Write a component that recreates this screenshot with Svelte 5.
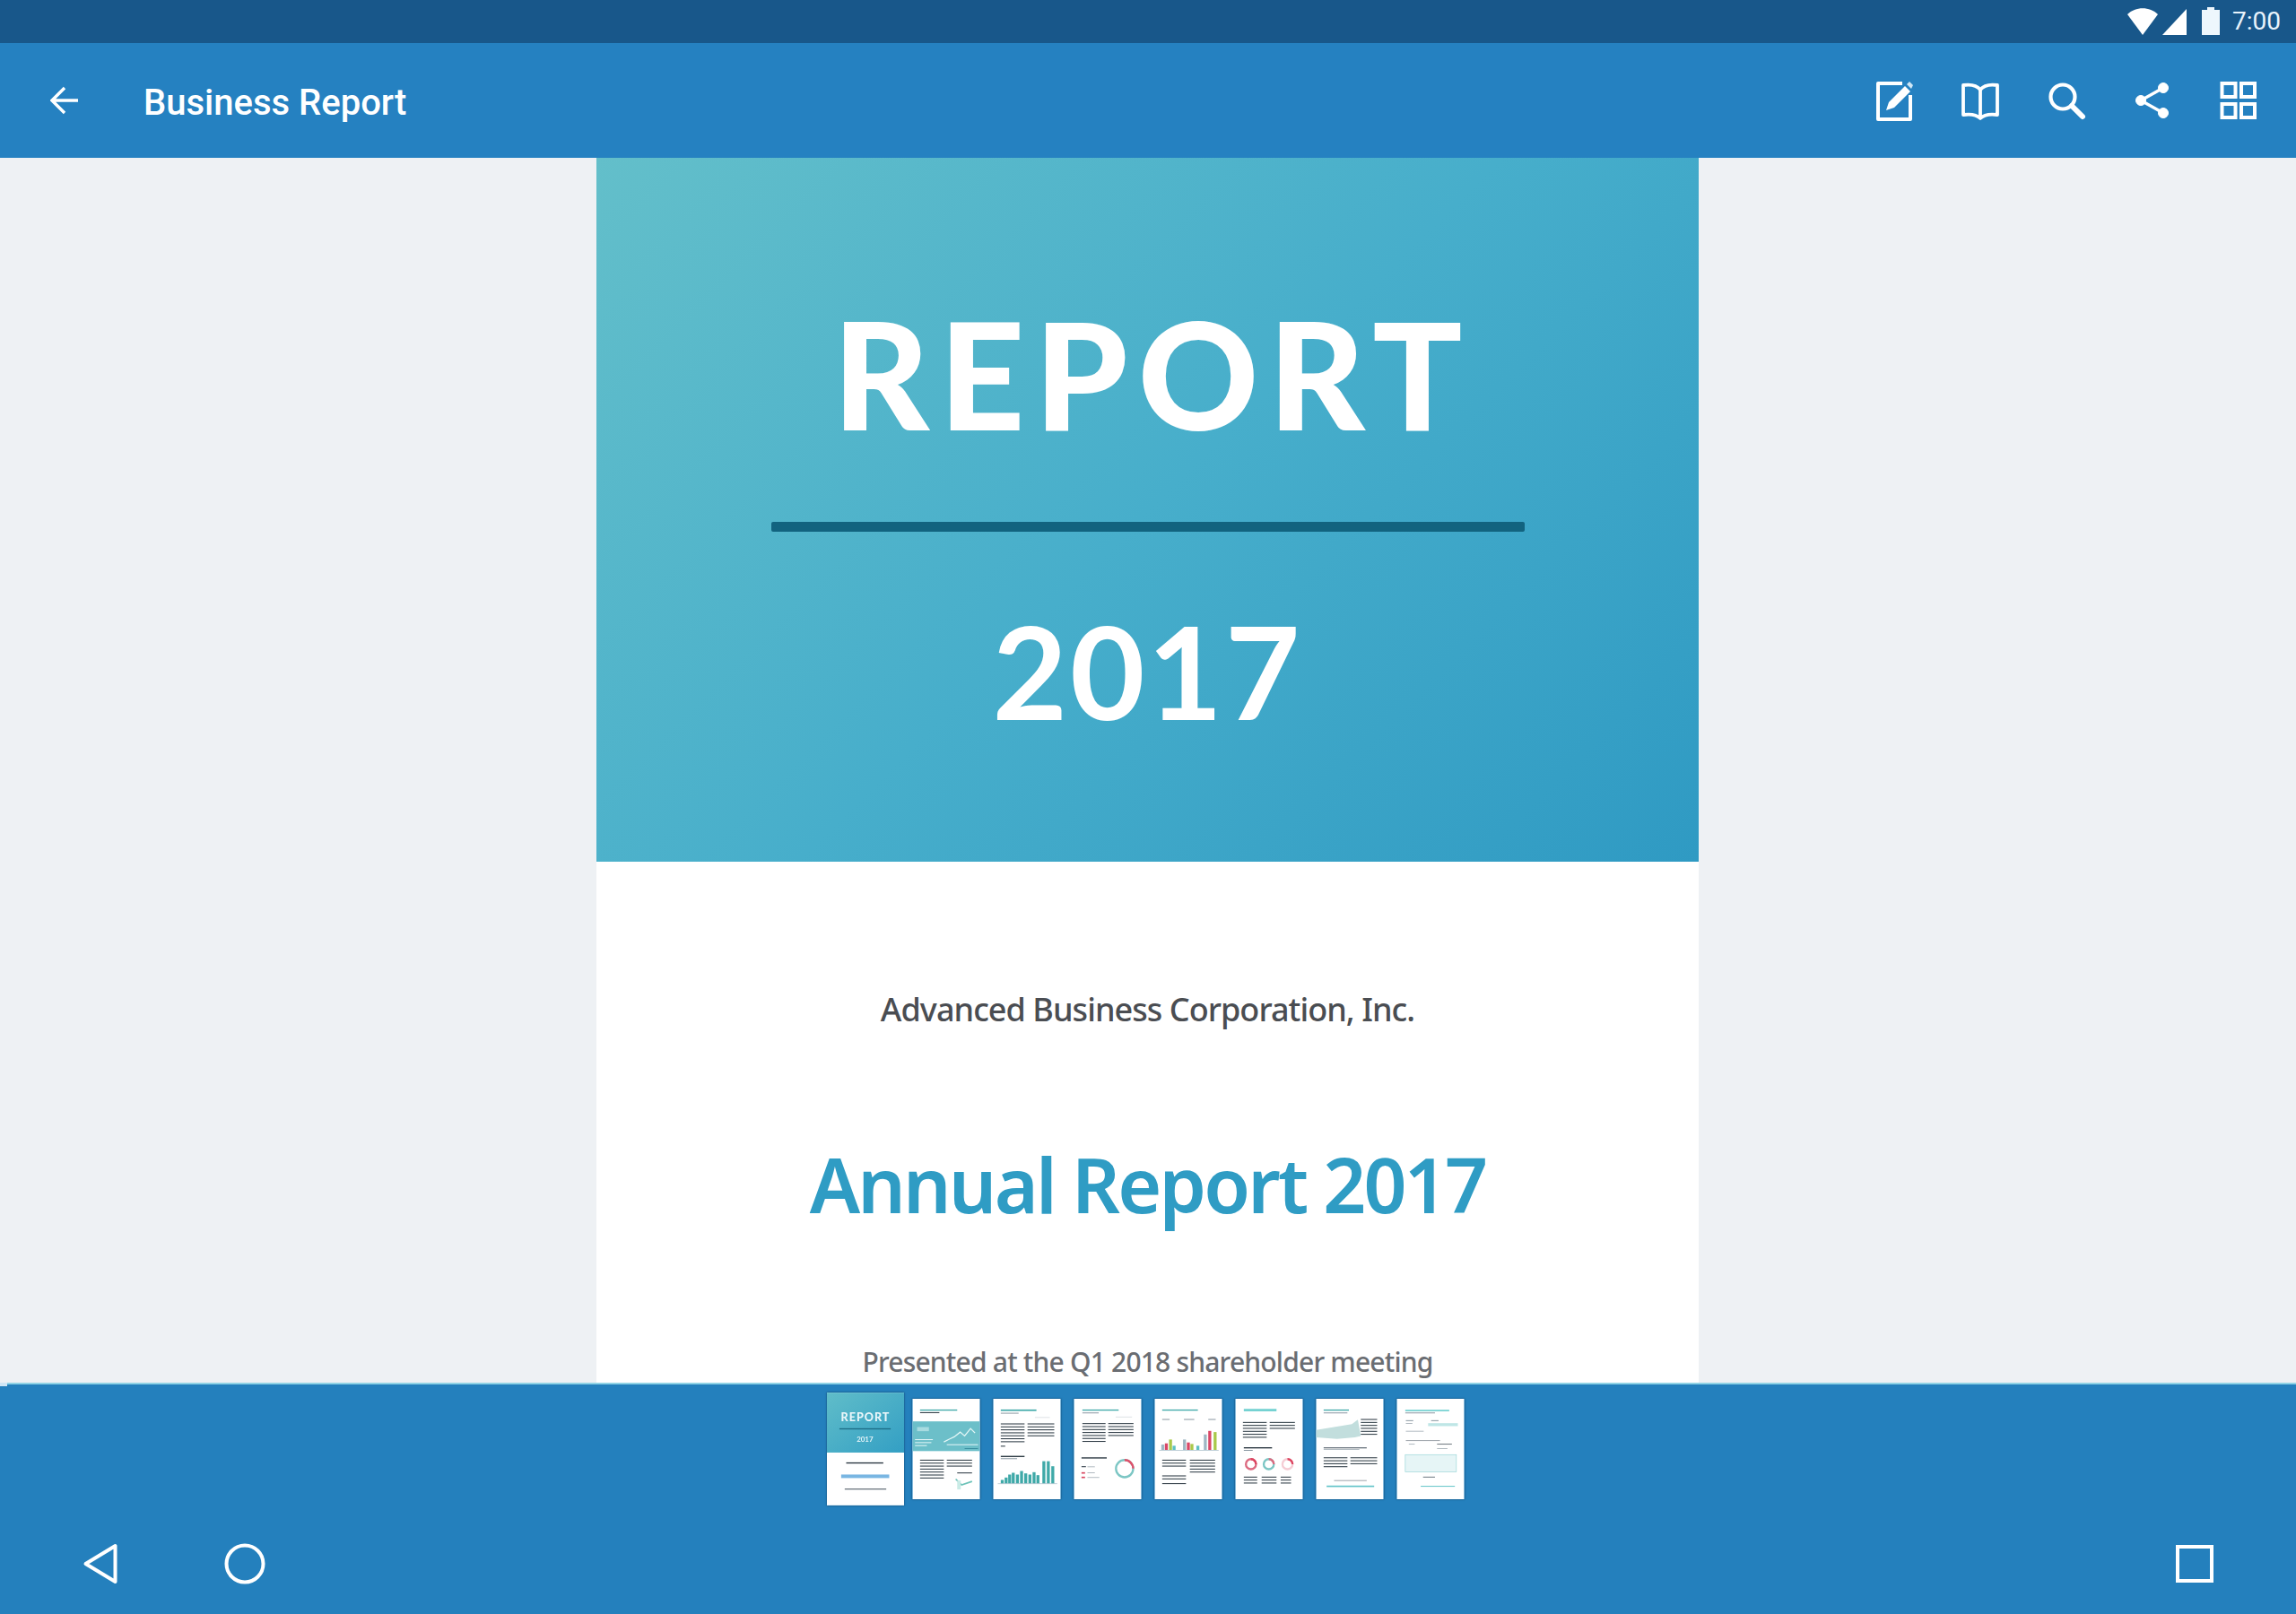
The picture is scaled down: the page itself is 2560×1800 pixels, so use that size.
<script>
  const dark = '#24323c';
  const teal = '#3fa9a8';
  const grey = '#8a98a2';
  const col = (x, w, y0, n, step = 10) => Array.from({ length: n }, (_, i) => ({ x, w, y: y0 + i * step, h: 3, c: dark }));
  const thumbs = [
    { lines: [
      { x: 25, w: 125, y: 36, h: 4, c: teal }, { x: 25, w: 65, y: 45, h: 3, c: dark },
      ...col(25, 80, 205, 7), ...col(115, 85, 205, 3), { x: 150, w: 50, y: 248, h: 3, c: dark }
    ], band: true },
    { lines: [
      { x: 25, w: 120, y: 36, h: 5, c: teal }, { x: 25, w: 60, y: 47, h: 3, c: grey }, { x: 140, w: 50, y: 62, h: 2, c: '#ccd3d8' },
      ...col(25, 80, 83, 7), ...col(115, 90, 83, 5), { x: 25, w: 15, y: 158, h: 3, c: dark },
      { x: 25, w: 80, y: 192, h: 4, c: dark }, { x: 25, w: 55, y: 200, h: 3, c: grey }
    ], bars: [[25,12],[38,20],[50,30],[62,36],[76,30],[90,42],[104,34],[118,30],[132,38],[145,28],[165,75],[180,75],[195,58]], barBase: 285, barColors: [teal] },
    { lines: [
      { x: 28, w: 122, y: 36, h: 4, c: teal }, { x: 28, w: 55, y: 46, h: 3, c: grey }, { x: 140, w: 55, y: 60, h: 2, c: '#ccd3d8' },
      ...col(28, 78, 82, 7), ...col(115, 85, 82, 5), { x: 25, w: 85, y: 197, h: 4, c: dark }, { x: 25, w: 15, y: 227, h: 3, c: dark },
      { x: 45, w: 25, y: 228, h: 2, c: grey }, { x: 25, w: 12, y: 247, h: 5, c: '#d8455f' }, { x: 45, w: 25, y: 248, h: 2, c: grey },
      { x: 25, w: 12, y: 262, h: 5, c: '#d8455f' }, { x: 45, w: 40, y: 264, h: 2, c: grey }
    ], donuts: [{ cx: 170, cy: 235, r: 29, w: 7, c: '#7cc6c4', a: '#e0506a' }] },
    { lines: [
      { x: 25, w: 120, y: 36, h: 4, c: teal }, { x: 25, w: 25, y: 68, h: 3, c: grey }, { x: 98, w: 35, y: 68, h: 3, c: grey }, { x: 180, w: 25, y: 68, h: 3, c: grey },
      ...col(25, 80, 205, 3), ...col(118, 85, 205, 5), { x: 25, w: 80, y: 258, h: 3, c: dark }, { x: 25, w: 80, y: 268, h: 3, c: dark }, { x: 25, w: 80, y: 284, h: 3, c: dark }
    ], bars: [[22,18],[34,22],[48,35],[60,14],[95,35],[108,25],[120,20],[140,14],[165,52],[180,64],[198,60]], barBase: 172, barColors: ['#9fb7c4', '#d94766', '#a9c94a', '#5cc0c4'] },
    { lines: [
      { x: 28, w: 110, y: 34, h: 8, c: '#6fd0d0' }, ...col(25, 80, 78, 6), ...col(115, 85, 78, 3),
      { x: 28, w: 95, y: 163, h: 4, c: dark }, { x: 28, w: 30, y: 172, h: 3, c: grey },
      ...col(28, 45, 262, 3), ...col(88, 50, 262, 3), ...col(152, 35, 262, 3)
    ], donuts: [
      { cx: 52, cy: 220, r: 17, w: 7, c: '#dc6a80', a: '#dc4560' },
      { cx: 112, cy: 220, r: 17, w: 7, c: '#7cc6c4', a: '#dc6a80' },
      { cx: 175, cy: 220, r: 17, w: 7, c: '#f5ccd4', a: '#dc4560' }
    ] },
    { lines: [
      { x: 25, w: 85, y: 36, h: 4, c: teal }, { x: 25, w: 80, y: 46, h: 3, c: grey },
      ...col(150, 55, 68, 6), { x: 25, w: 145, y: 163, h: 4, c: '#6d7780' }, { x: 25, w: 120, y: 170, h: 2, c: grey },
      ...col(25, 80, 197, 4), ...col(115, 90, 197, 3), { x: 60, w: 110, y: 274, h: 2, c: '#6d7780' }, { x: 35, w: 160, y: 292, h: 5, c: '#62c4c8' }
    ], wash: 'M0 105 L60 95 L120 85 L140 70 L150 125 L130 130 L70 135 L0 130 Z' },
    { lines: [
      { x: 28, w: 148, y: 37, h: 5, c: '#6fd0d0' }, { x: 28, w: 100, y: 46, h: 3, c: grey }, { x: 30, w: 25, y: 72, h: 3, c: grey }, { x: 115, w: 25, y: 72, h: 3, c: grey },
      { x: 30, w: 22, y: 82, h: 2, c: grey }, { x: 105, w: 100, y: 82, h: 10, c: '#bfe6e6' }, { x: 30, w: 60, y: 108, h: 2, c: grey },
      { x: 30, w: 115, y: 140, h: 2, c: '#6d7780' }, { x: 40, w: 20, y: 152, h: 2, c: grey }, { x: 135, w: 50, y: 152, h: 2, c: dark }, { x: 135, w: 35, y: 166, h: 2, c: grey },
      { x: 88, w: 40, y: 262, h: 3, c: '#6d7780' }, { x: 80, w: 115, y: 293, h: 3, c: '#62c4c8' }
    ], box: true }
  ];
</script>

<div class="screen">
  <header class="status">
    <svg class="ic-wifi" viewBox="0 0 34 30" width="34" height="30"><path d="M0 7 C9 -2 25 -2 34 7 L17 30 Z" fill="#fff"/></svg>
    <svg class="ic-signal" viewBox="0 0 27 29" width="27" height="29"><path d="M27 0 V29 H0 Z" fill="#fff"/></svg>
    <svg class="ic-battery" viewBox="0 0 20 31" width="20" height="31"><path d="M6 0 H14 V3 H20 V31 H0 V3 H6 Z" fill="#eef7fd"/></svg>
    <span class="time">7:00</span>
  </header>

  <nav class="toolbar">
    <svg class="back" viewBox="0 0 32 32" width="32" height="32"><path d="M31 16 H3 M16 2 L2 16 L16 30" fill="none" stroke="#fff" stroke-width="3.4"/></svg>
    <h1>Business Report</h1>
    <div class="actions">
      <svg viewBox="0 0 48 48" width="48" height="48" fill="none" stroke="#fff" stroke-width="4">
        <path d="M33 5 H6 V45 H42 V18" stroke-linejoin="round"/>
        <path d="M15 35 L18 26 L36 8 L42 14 L24 32 Z" fill="#fff" stroke="none"/>
        <path d="M38 6 L41 3 L45 7 L43 11 Z" fill="#cfe6f5" stroke="none"/>
      </svg>
      <svg viewBox="0 0 48 48" width="48" height="48" fill="none" stroke="#fff" stroke-width="3.8" stroke-linejoin="round">
        <path d="M24 12 C20 7 12 6 5 7 V40 C12 39 20 40 24 44 C28 40 36 39 43 40 V7 C36 6 28 7 24 12 Z"/>
        <path d="M24 12 V44"/>
      </svg>
      <svg viewBox="0 0 48 48" width="48" height="48" fill="none" stroke="#fff">
        <circle cx="20" cy="20" r="13.5" stroke-width="4.2"/>
        <path d="M30 30 L42 42" stroke-width="6" stroke-linecap="round"/>
      </svg>
      <svg viewBox="0 0 48 48" width="48" height="48" fill="#fff" stroke="#fff">
        <path d="M36 10 L11 24 L36 38" fill="none" stroke-width="3.4"/>
        <circle cx="36" cy="10" r="5.5"/><circle cx="11" cy="24" r="5.5"/><circle cx="36" cy="38" r="5.5"/>
      </svg>
      <svg viewBox="0 0 48 48" width="48" height="48" fill="none" stroke="#fff" stroke-width="4">
        <rect x="5.5" y="5" width="15" height="15"/><rect x="27" y="5" width="15" height="15"/>
        <rect x="5.5" y="28" width="15" height="15"/><rect x="27" y="28" width="15" height="15"/>
      </svg>
    </div>
  </nav>

  <main class="viewer">
    <article class="page">
      <section class="hero">
        <div class="hero-title">REPORT</div>
        <div class="hero-rule"></div>
        <div class="hero-year">2017</div>
      </section>
      <section class="body">
        <p class="company">Advanced Business Corporation, Inc.</p>
        <p class="annual">Annual Report 2017</p>
        <p class="presented">Presented at the Q1 2018 shareholder meeting</p>
      </section>
    </article>
  </main>

  <footer class="bottom">
    <div class="progress"></div>
    <div class="strip">
      <div class="thumb first">
        <svg viewBox="0 0 260 380" width="86" height="126" class="mini">
          <defs><linearGradient id="tg" x1="0" y1="0" x2="1" y2="1"><stop offset="0" stop-color="#60bdc9"/><stop offset="1" stop-color="#339fc4"/></linearGradient></defs>
          <rect width="260" height="380" fill="#fff"/>
          <rect width="260" height="202" fill="url(#tg)"/>
          <text x="130" y="95" text-anchor="middle" class="mini-report">REPORT</text>
          <rect x="42" y="120" width="173" height="4" fill="#1d6c86"/>
          <text x="128" y="166" text-anchor="middle" class="mini-year">2017</text>
          <rect x="65" y="235" width="125" height="4" fill={dark}/>
          <rect x="48" y="276" width="162" height="12" fill="#79b6e2"/>
          <rect x="60" y="323" width="140" height="4" fill="#6d7780"/>
        </svg>
      </div>
      {#each thumbs as t}
        <div class="thumb">
          <svg viewBox="0 0 226 338" width="76" height="112" class="mini">
            <rect width="226" height="338" fill="#fff"/>
            {#if t.band}
              <rect y="76" width="226" height="100" fill="#6cbfc9"/>
              <rect x="15" y="95" width="40" height="14" fill="#a8dbe0"/>
              <rect x="8" y="136" width="60" height="3" fill="#e7f7f8"/><rect x="8" y="146" width="55" height="3" fill="#e7f7f8"/><rect x="8" y="156" width="40" height="3" fill="#e7f7f8"/>
              <path d="M105 145 L125 135 L140 128 L160 112 L175 125 L195 100 L210 115" fill="none" stroke="#e3f6f6" stroke-width="4"/>
              <rect x="115" y="153" width="105" height="3" fill="#e7f7f8"/><rect x="175" y="166" width="45" height="3" fill="#3b8fa0"/>
              <path d="M145 270 L165 290 L200 278" fill="none" stroke="#6cc2b8" stroke-width="5"/>
              <rect x="150" y="275" width="12" height="30" fill="#c9ebe6"/>
            {/if}
            {#if t.wash}<path d={t.wash} fill="#c2dedd"/>{/if}
            {#if t.box}<rect x="28" y="188" width="172" height="58" fill="#e6f5f6" stroke="#9ad5d8" stroke-width="2"/>{/if}
            {#each t.lines as l}
              <rect x={l.x} y={l.y} width={l.w} height={l.h} fill={l.c}/>
            {/each}
            {#if t.bars}
              {#each t.bars as b, i}
                <rect x={b[0]} y={t.barBase - b[1]} width="10" height={b[1]} fill={t.barColors[i % t.barColors.length]}/>
              {/each}
              <rect x="15" y={t.barBase} width="200" height="2" fill="#9fb7c4"/>
            {/if}
            {#if t.donuts}
              {#each t.donuts as d}
                <circle cx={d.cx} cy={d.cy} r={d.r} fill="none" stroke={d.c} stroke-width={d.w}/>
                <path d="M{d.cx} {d.cy - d.r} A{d.r} {d.r} 0 0 1 {d.cx + d.r} {d.cy}" fill="none" stroke={d.a} stroke-width={d.w}/>
              {/each}
            {/if}
          </svg>
        </div>
      {/each}
    </div>
    <div class="sysnav">
      <svg viewBox="0 0 40 46" width="40" height="46"><path d="M36.5 3 V43 L3.5 23 Z" fill="none" stroke="#fff" stroke-width="4" stroke-linejoin="round"/></svg>
      <svg class="home" viewBox="0 0 46 46" width="46" height="46"><circle cx="23" cy="23" r="20.5" fill="none" stroke="#fff" stroke-width="4"/></svg>
      <svg class="recent" viewBox="0 0 42 42" width="42" height="42"><rect x="2" y="2" width="38" height="38" fill="none" stroke="#fff" stroke-width="4"/></svg>
    </div>
  </footer>
</div>

<style>
  :global(body) { margin: 0; background: #eef1f4; }
  .screen {
    width: 2560px;
    height: 1800px;
    display: flex;
    flex-direction: column;
    overflow: hidden;
    background: #eef1f4;
  }
  .status {
    height: 48px;
    background: #18578a;
    display: flex;
    align-items: center;
    padding-right: 17px;
    justify-content: flex-end;
    flex: none;
  }
  .ic-signal { margin-left: 5px; }
  .ic-battery { margin-left: 17px; margin-bottom: 2px; }
  .time {
    margin-left: 14px;
    color: #e8f3fb;
    font: 400 28px/1 Roboto, sans-serif;
  }
  .toolbar {
    height: 128px;
    flex: none;
    background: #2581c1;
    display: flex;
    align-items: center;
    padding: 0 40px 0 56px;
  }
  h1 {
    margin: 6px 0 0 72px;
    color: #fff;
    font: 500 40px/1 Roboto, sans-serif;
  }
  .actions {
    margin-left: auto;
    display: flex;
    gap: 48px;
  }
  .viewer {
    flex: 1;
    min-height: 0;
    overflow: hidden;
    display: flex;
    justify-content: center;
    background: #eef1f4;
  }
  .page {
    width: 1229px;
    background: #fff;
    flex: none;
    margin-right: 1px;
    display: flex;
    flex-direction: column;
  }
  .hero {
    height: 785px;
    flex: none;
    background: linear-gradient(135deg, #63bfca 0%, #47aecb 50%, #2f9ac3 100%);
    display: flex;
    flex-direction: column;
    align-items: center;
    color: #fff;
    font-family: Lato, sans-serif;
    font-weight: 900;
  }
  .hero-title {
    margin-top: 145px;
    font-size: 166px;
    line-height: 190px;
    letter-spacing: 11px;
    margin-right: -11px;
    height: 190px;
  }
  .hero-rule {
    width: 840px;
    height: 11px;
    border-radius: 2px;
    margin-top: 71px;
    background: #12637f;
  }
  .hero-year {
    margin-top: 70px;
    font-size: 144px;
    line-height: 170px;
    letter-spacing: 3px;
    font-weight: 700;
  }
  .body {
    flex: 1;
    text-align: center;
    font-family: "Noto Sans", sans-serif;
  }
  .body p { margin: 0; white-space: nowrap; }
  .company {
    margin-top: 140px !important;
    color: #4a4d52;
    font-size: 36px;
    line-height: 50px;
    font-weight: 500;
    letter-spacing: -0.95px;
  }
  .annual {
    margin-top: 115px !important;
    color: #2f9cc4;
    font-size: 84px;
    line-height: 110px;
    font-weight: 600;
    letter-spacing: -2.8px;
  }
  .presented {
    margin-top: 123px !important;
    color: #6a6d72;
    font-size: 30px;
    line-height: 40px;
    font-weight: 500;
    letter-spacing: -0.8px;
  }
  .bottom {
    height: 258px;
    flex: none;
    background: #2480bd;
    display: flex;
    flex-direction: column;
    position: relative;
    border-top: 2px solid #8fd3e6;
    box-sizing: border-box;
  }
  .progress {
    position: absolute;
    left: 0;
    top: -2px;
    width: 8px;
    height: 4px;
    background: #cfe6f5;
  }
  .strip {
    display: flex;
    align-items: center;
    justify-content: center;
    gap: 14px;
    padding-top: 9px;
    margin-left: -5px;
    height: 126px;
  }
  .thumb {
    display: flex;
    box-shadow: 0 0 2px #123f66;
  }
  .thumb.first { margin-right: -5px; }
  .mini { display: block; filter: blur(0.3px); }
  .mini-report { font: 900 38px Lato, sans-serif; fill: #eaf6fa; letter-spacing: 3px; }
  .mini-year { font: 700 24px Lato, sans-serif; fill: #e2f3f8; }
  .sysnav {
    display: flex;
    align-items: center;
    padding: 42px 92px 0 92px;
  }
  .home { margin-left: 118px; }
  .recent { margin-left: auto; }
</style>
